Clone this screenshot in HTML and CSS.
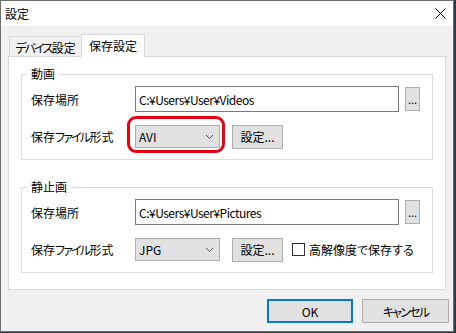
FILE: index.html
```html
<!DOCTYPE html>
<html>
<head>
  <meta charset="UTF-8">
  <title>設定</title>
  <link rel="stylesheet" href="styles.css">
</head>
<body>
  <div class="window">
    <div class="titlebar">
      <span class="title">設定</span>
      <svg class="close" width="11" height="11" viewBox="0 0 11 11">
        <path d="M0.5 0.5 L10.5 10.5 M10.5 0.5 L0.5 10.5" stroke="#000" stroke-width="1" fill="none"/>
      </svg>
    </div>

    <div class="tabs">
      <div class="tab"><span class="kana">デバイス</span>設定</div>
      <div class="tab active">保存設定</div>
    </div>

    <div class="panel">
      <!-- 動画 -->
      <fieldset class="group">
        <legend>動画</legend>
        <div class="row">
          <span class="label">保存場所</span>
          <div class="path">C:¥Users¥User¥Videos</div>
          <button class="btn browse">...</button>
        </div>
        <div class="row">
          <span class="label">保存<span class="kana">ファイル</span>形式</span>
          <div class="combo-wrap marked">
            <div class="combo">
              <span>AVI</span>
              <svg width="7" height="4" viewBox="0 0 7 4"><path d="M0 0 L3.5 3.5 L7 0" stroke="#555" stroke-width="1" fill="none"/></svg>
            </div>
          </div>
          <button class="btn setting">設定...</button>
        </div>
      </fieldset>

      <!-- 静止画 -->
      <fieldset class="group">
        <legend>静止画</legend>
        <div class="row">
          <span class="label">保存場所</span>
          <div class="path">C:¥Users¥User¥Pictures</div>
          <button class="btn browse">...</button>
        </div>
        <div class="row">
          <span class="label">保存<span class="kana">ファイル</span>形式</span>
          <div class="combo-wrap">
            <div class="combo">
              <span>JPG</span>
              <svg width="7" height="4" viewBox="0 0 7 4"><path d="M0 0 L3.5 3.5 L7 0" stroke="#555" stroke-width="1" fill="none"/></svg>
            </div>
          </div>
          <button class="btn setting">設定...</button>
          <label class="check"><span class="box"></span>高解像度で保存する</label>
        </div>
      </fieldset>
    </div>

    <div class="footer">
      <button class="btn primary">OK</button>
      <button class="btn cancel"><span class="kana">キャンセル</span></button>
    </div>
  </div>
</body>
</html>
```

FILE: styles.css
```css
html, body { margin: 0; height: 100%; }
body {
  background: #2d3a40;
  font-family: "Noto Sans CJK JP", "Noto Sans", sans-serif;
  font-size: 12px;
  font-feature-settings: "palt";
  color: #000;
}
/* katakana is narrower in the system UI font */
.kana { letter-spacing: -1.8px; }

.window {
  width: 452px;
  height: 330px;
  border: 1px solid #6d6d6d;
  background: #f0f0f0;
  display: flex;
  flex-direction: column;
}
/* --- title bar --- */
.titlebar {
  height: 25px;
  background: #fff;
  display: flex;
  align-items: center;
  justify-content: space-between;
  padding: 0 7px 0 4px;
}
.close { display: block; }

/* --- tabs --- */
.tabs {
  display: flex;
  align-items: flex-end;
  height: 22px;
  margin-top: 8px;
  padding-left: 8px;
}
.tab {
  height: 20px;
  width: 72px;
  box-sizing: border-box;
  border: 1px solid #d9d9d9;
  border-bottom: none;
  border-right: none;
  background: #f0f0f0;
  display: flex;
  align-items: center;
  justify-content: center;
  padding-top: 1px;
}
.tab.active {
  height: 23px;
  width: 64px;
  margin-bottom: -1px;
  border-right: 1px solid #d9d9d9;
  background: #fff;
  position: relative;
  z-index: 1;
  padding-top: 0;
  padding-bottom: 2px;
}

/* --- panel --- */
.panel {
  margin-left: 7px;
  width: 438px;
  height: 234px;
  box-sizing: border-box;
  border: 1px solid #d9d9d9;
  background: #fff;
  padding: 9px 12px 16px 12px;
  display: flex;
  flex-direction: column;
  gap: 19px;
}
.group {
  margin: 0;
  padding: 4px 12px 10px 9px;
  border: 1px solid #dcdcdc;
  min-inline-size: 0;
}
.group legend {
  padding: 0 4px;
  margin-left: -4px;
  line-height: 16px;
}
.row {
  display: flex;
  align-items: center;
}
.row + .row {
  margin-top: 12px;
  height: 25px;
}
.label { width: 104px; }
.path {
  width: 264px;
  height: 26px;
  box-sizing: border-box;
  border: 1px solid #7a7a7a;
  padding-left: 3px;
  display: flex;
  align-items: center;
  margin-right: 6px;
  letter-spacing: -0.5px;
}

/* --- buttons --- */
.btn {
  font: inherit;
  color: #000;
  background: #e1e1e1;
  border: 1px solid #adadad;
  padding: 0;
  height: 24px;
  box-sizing: border-box;
}
.browse { width: 15px; font-size: 11px; }
.setting { width: 51px; margin-left: 12px; }

.combo-wrap { position: relative; }
.combo {
  width: 85px;
  height: 23px;
  box-sizing: border-box;
  background: #e1e1e1;
  border: 1px solid #adadad;
  display: flex;
  align-items: center;
  justify-content: space-between;
  padding: 0 6px 0 3px;
}
.combo svg { display: block; }
.marked::after {
  content: "";
  position: absolute;
  left: -8px;
  top: -9px;
  right: -5px;
  bottom: -5px;
  border: 3px solid #e60012;
  border-radius: 9px;
}
.check {
  display: flex;
  align-items: center;
  margin-left: 9px;
  gap: 4px;
}
.check .box {
  width: 13px;
  height: 13px;
  box-sizing: border-box;
  border: 1px solid #333;
  background: #fff;
}

/* --- footer --- */
.footer {
  display: flex;
  justify-content: flex-end;
  gap: 9px;
  margin-top: 9px;
  padding-right: 4px;
}
.primary { width: 86px; border: 2px solid #0078d7; }
.cancel { width: 87px; }
```
